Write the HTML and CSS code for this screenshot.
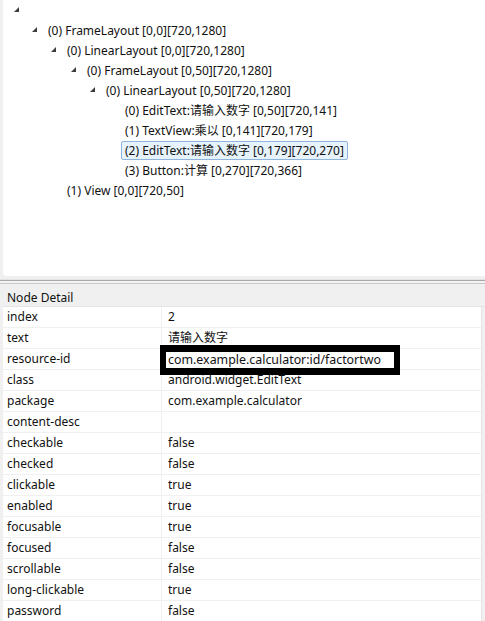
FILE: index.html
```html
<!DOCTYPE html>
<html>
<head>
<meta charset="utf-8">
<link rel="stylesheet" href="styles.css">
</head>
<body>
<div class="app">
  <div class="tree">
    <div class="row l0 first"><span class="arrow"></span></div>
    <div class="row l1"><span class="arrow"></span><span class="label">(0) FrameLayout [0,0][720,1280]</span></div>
    <div class="row l2"><span class="arrow"></span><span class="label">(0) LinearLayout [0,0][720,1280]</span></div>
    <div class="row l3"><span class="arrow"></span><span class="label">(0) FrameLayout [0,50][720,1280]</span></div>
    <div class="row l4"><span class="arrow"></span><span class="label">(0) LinearLayout [0,50][720,1280]</span></div>
    <div class="row l5"><span class="noarrow"></span><span class="label">(0) EditText:请输入数字 [0,50][720,141]</span></div>
    <div class="row l5"><span class="noarrow"></span><span class="label">(1) TextView:乘以 [0,141][720,179]</span></div>
    <div class="row l5"><span class="noarrow"></span><span class="label selected">(2) EditText:请输入数字 [0,179][720,270]</span></div>
    <div class="row l5"><span class="noarrow"></span><span class="label">(3) Button:计算 [0,270][720,366]</span></div>
    <div class="row l2"><span class="noarrow"></span><span class="label">(1) View [0,0][720,50]</span></div>
  </div>
  <div class="sash"></div>
  <div class="detail">
    <div class="detail-title">Node Detail</div>
    <div class="table">
      <div class="tr"><div class="k">index</div><div class="v">2</div></div>
      <div class="tr"><div class="k">text</div><div class="v">请输入数字</div></div>
      <div class="tr"><div class="k">resource-id</div><div class="v boxcell"><span class="boxed">com.example.calculator:id/factortwo</span></div></div>
      <div class="tr"><div class="k">class</div><div class="v">android.widget.EditText</div></div>
      <div class="tr"><div class="k">package</div><div class="v">com.example.calculator</div></div>
      <div class="tr"><div class="k">content-desc</div><div class="v"></div></div>
      <div class="tr"><div class="k">checkable</div><div class="v">false</div></div>
      <div class="tr"><div class="k">checked</div><div class="v">false</div></div>
      <div class="tr"><div class="k">clickable</div><div class="v">true</div></div>
      <div class="tr"><div class="k">enabled</div><div class="v">true</div></div>
      <div class="tr"><div class="k">focusable</div><div class="v">true</div></div>
      <div class="tr"><div class="k">focused</div><div class="v">false</div></div>
      <div class="tr"><div class="k">scrollable</div><div class="v">false</div></div>
      <div class="tr"><div class="k">long-clickable</div><div class="v">true</div></div>
      <div class="tr"><div class="k">password</div><div class="v">false</div></div>
    </div>
  </div>
</div>
</body>
</html>
```
FILE: styles.css
```css
html, body {
  margin: 0;
  padding: 0;
  background: #f0f0f0;
}
body {
  font-family: "Noto Sans", "Noto Sans CJK SC", sans-serif;
  font-size: 12px;
  color: #111;
  width: 485px;
  height: 621px;
  overflow: hidden;
}
.app {
  display: flex;
  flex-direction: column;
  height: 621px;
}
.tree {
  height: 276px;
  flex: none;
  box-sizing: border-box;
  background: #fff;
  margin-left: 3px;
  border-bottom-left-radius: 4px;
  display: flex;
  flex-direction: column;
}
.row {
  height: 20px;
  display: flex;
  align-items: center;
  white-space: nowrap;
}
.first {
  align-items: flex-end;
  height: 15px;
  padding-bottom: 5px;
}
.l0 { padding-left: 9px; }
.l1 { padding-left: 27px; }
.l2 { padding-left: 46px; }
.l3 { padding-left: 66px; }
.l4 { padding-left: 85px; }
.l5 { padding-left: 104px; }
.arrow {
  width: 14px;
  height: 10px;
  flex: none;
  position: relative;
}
.arrow::before {
  content: "";
  position: absolute;
  left: 2px;
  top: 2px;
  width: 0;
  height: 0;
  border-left: 5px solid transparent;
  border-bottom: 5px solid #3c3c3c;
}
.noarrow {
  width: 14px;
  flex: none;
}
.label {
  padding: 1px 3px;
  border: 1px solid transparent;
  line-height: 15px;
}
.selected {
  background: #e6f2fc;
  border-color: #8fb4de;
  border-radius: 2px;
}
.sash {
  height: 13px;
  flex: none;
  background: linear-gradient(to bottom, #f0f0f0 0, #f0f0f0 3px, #e3e3e3 3px, #e3e3e3 4px, #a9a9a9 4px, #a9a9a9 5px, #f4f4f4 5px, #f4f4f4 7px, #c8c8c8 7px, #c8c8c8 8px, #f0f0f0 8px);
}
.detail {
  flex: 1;
  display: flex;
  flex-direction: column;
  margin-left: 3px;
}
.detail-title {
  height: 17px;
  line-height: 18px;
  padding-left: 4px;
  background: #f0f0f0;
  border-bottom: 1px solid #e4e4e4;
  flex: none;
}
.table {
  background: #fff;
  margin-right: 3px;
  border-right: 1px solid #e4e4e4;
}
.tr {
  display: grid;
  grid-template-columns: 159px 1fr;
  height: 21px;
  box-sizing: border-box;
  border-bottom: 1px solid #f0f0f0;
}
.k, .v {
  line-height: 20px;
  padding-left: 4px;
  white-space: nowrap;
}
.k {
  border-right: 1px solid #f0f0f0;
}
.v {
  padding-left: 6px;
}
.boxcell {
  display: flex;
  align-items: flex-start;
  position: relative;
  z-index: 1;
}
.boxed {
  display: block;
  border: 6px solid #000;
  border-top-width: 7px;
  border-bottom-width: 7px;
  margin-left: -8px;
  margin-top: -4px;
  padding: 0 0 0 2px;
  width: 226px;
  font-size: 12.4px;
  line-height: 16px;
  height: 16px;
  background: #fff;
}
```
